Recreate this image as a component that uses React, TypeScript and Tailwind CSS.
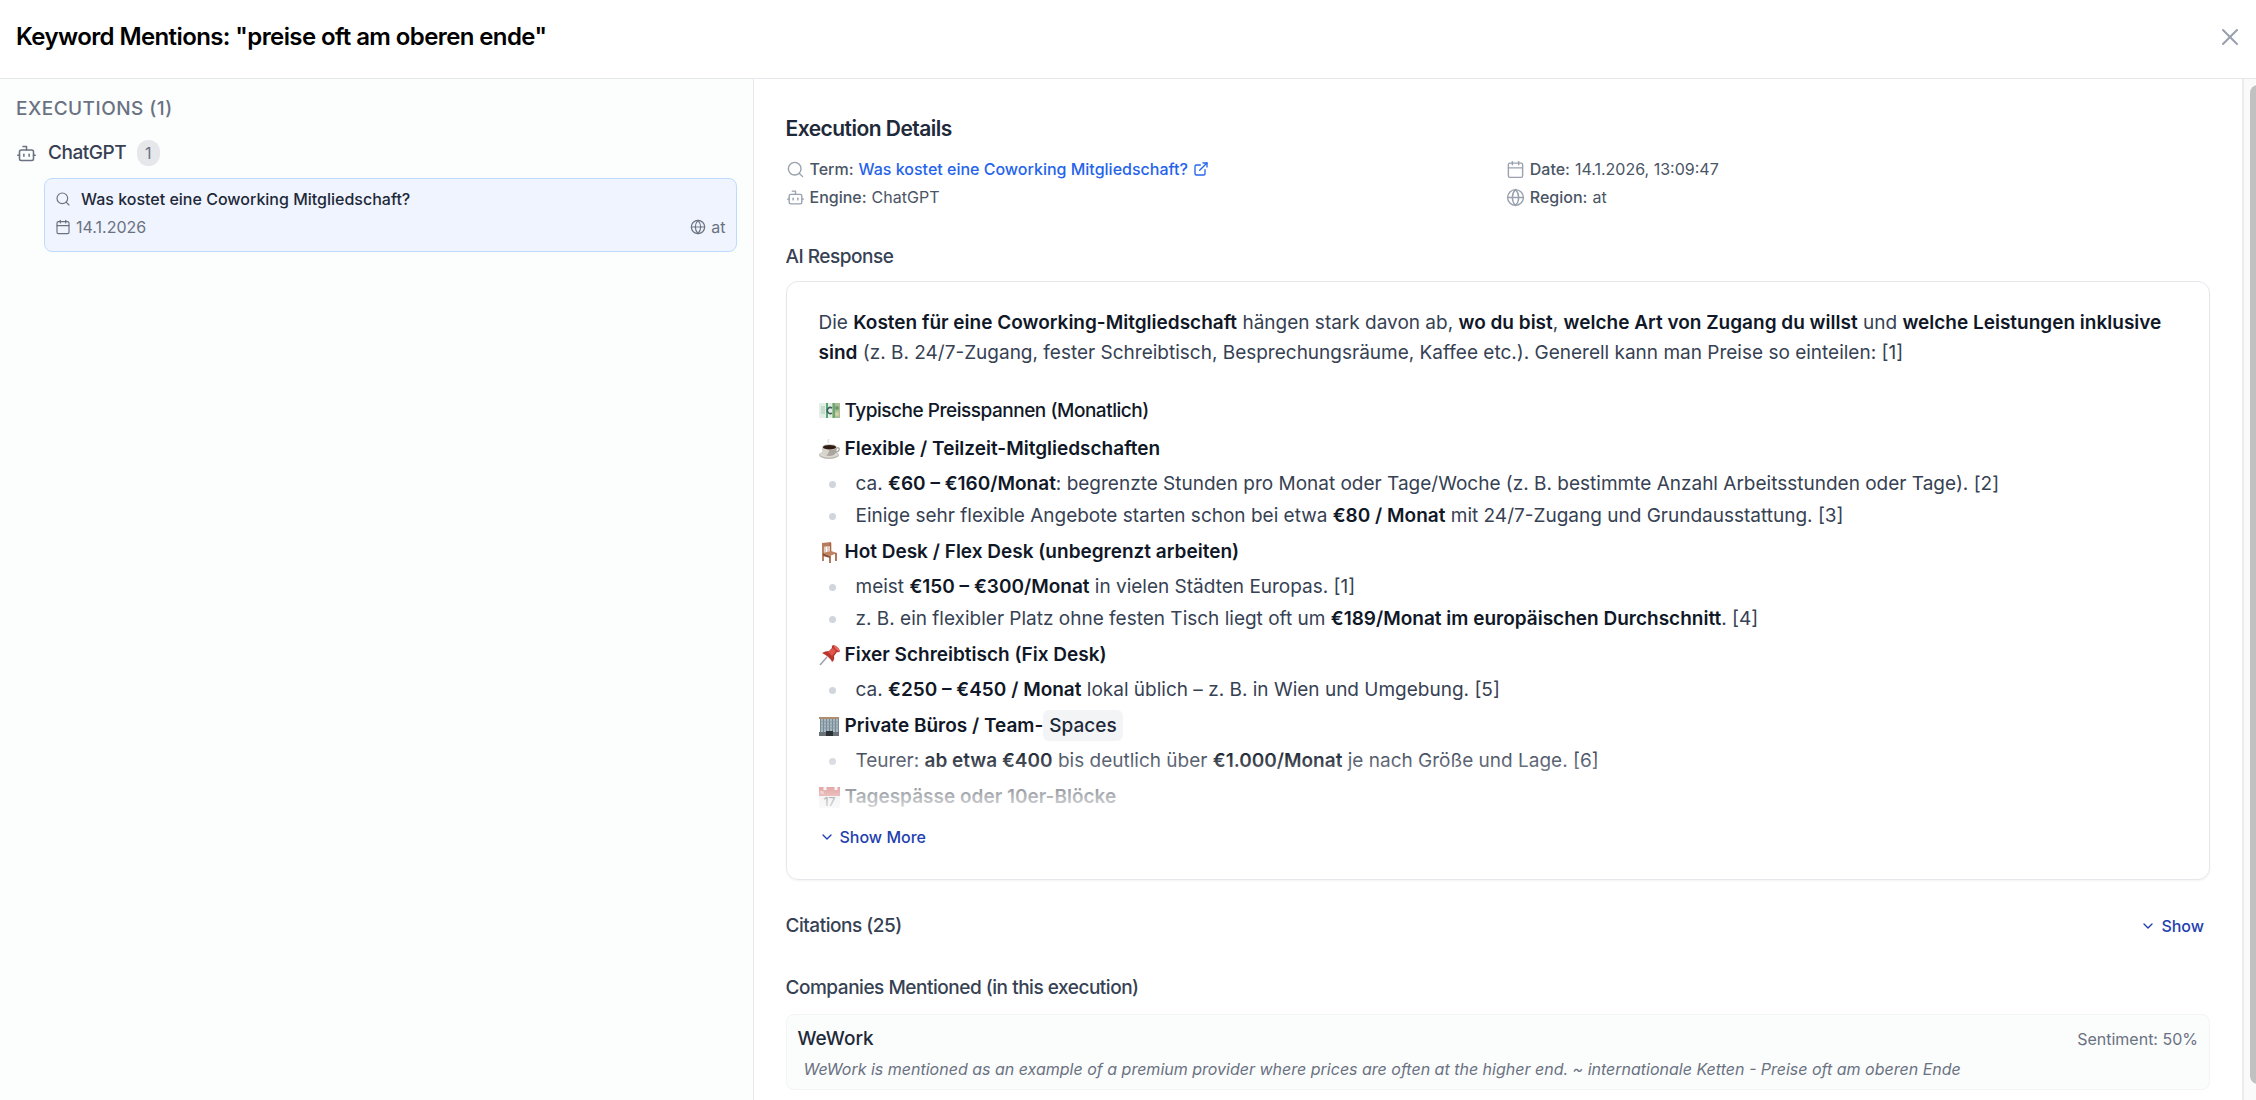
import { Bot, Calendar, ChevronDown, ExternalLink, Globe, Search, X } from "lucide-react";
import type { ReactNode } from "react";

type Section = {
  icon: ReactNode;
  title: ReactNode;
  items: ReactNode[];
};

const CashIcon = () => (
  <svg viewBox="0 0 21 21" className="w-[21px] h-[21px] shrink-0" aria-hidden="true">
    <rect x="0" y="2" width="21" height="15" rx="1" fill="#e3eee6" />
    <path d="M2 5h4v8H2z" fill="#c3dccb" />
    <rect x="7" y="2" width="2" height="15" fill="#58a673" />
    <rect x="13" y="2" width="8" height="15" fill="#a9bf98" />
    <path d="M14 2h2v15h-2z" fill="#6aa877" />
    <path d="M13 7a3 3 0 1 0 0 5" fill="none" stroke="#3d5a5b" strokeWidth="1.5" />
    <circle cx="18" cy="7" r="2" fill="#6f9a6c" />
    <circle cx="18" cy="13" r="2" fill="#d5cf9d" />
  </svg>
);

const CoffeeIcon = () => (
  <svg viewBox="0 0 21 21" className="w-[21px] h-[21px] shrink-0" aria-hidden="true">
    <path d="M10 0q-2 2 0 4" stroke="#dedede" strokeWidth="1.2" fill="none" />
    <ellipse cx="10" cy="16" rx="10" ry="4" fill="#bdb9b2" />
    <ellipse cx="10" cy="15.500" rx="9" ry="3" fill="#dcd9d4" />
    <path d="M3 8q0 9 7.500 9t7.500-9z" fill="#aaa59e" />
    <path d="M3 8q0 7 4 8.500q4-2 3-8.500z" fill="#d8d4cd" />
    <path d="M17 9q4-1 3 2t-5 2" stroke="#aaa59b" strokeWidth="1.300" fill="none" />
    <ellipse cx="10.500" cy="8" rx="7.500" ry="3" fill="#d9d6d0" />
    <ellipse cx="10.500" cy="8.200" rx="6.500" ry="2.300" fill="#2f1d14" />
  </svg>
);

const ChairIcon = () => (
  <svg viewBox="0 0 21 21" className="w-[21px] h-[21px] shrink-0" aria-hidden="true">
    <path d="M4 2v17" stroke="#a56546" strokeWidth="1.600" />
    <path d="M3 1l9-1v4l-9 1z" fill="#b87a5c" />
    <path d="M6 5v6M9 4v6" stroke="#c99a80" strokeWidth="1" />
    <path d="M11.500 1v9" stroke="#a56546" strokeWidth="1.600" />
    <path d="M4 11l8-2 6 2-7 3z" fill="#c08261" />
    <path d="M4 11l7 3v2l-7-2z" fill="#8f5236" />
    <path d="M11 14v7M17 11v8" stroke="#96593c" strokeWidth="1.600" />
  </svg>
);

const PinIcon = () => (
  <svg viewBox="0 0 21 21" className="w-[21px] h-[21px] shrink-0" aria-hidden="true">
    <path d="M8 12L1 20" stroke="#9aa3ab" strokeWidth="1.500" />
    <path d="M3 8q3-2 7-2l3-3q-1-2 1-3q5 1 7 6q-1 2-3 1l-3 4q1 4-2 6q-2-5-10-9z" fill="#b9352f" />
    <path d="M9 7l5-4 3 3-4 5z" fill="#e0564d" />
    <path d="M14 0q5 1 7 6l-2 0q-3-2-5-6z" fill="#e8695f" />
  </svg>
);

const OfficeIcon = () => (
  <svg viewBox="0 0 21 21" className="w-[21px] h-[21px] shrink-0" aria-hidden="true">
    <rect x="0" y="1" width="20" height="2" fill="#b08d6d" />
    <rect x="1" y="3" width="19" height="14" fill="#77868f" />
    <path d="M3 3v13M6 3v13M9 3v13M12 3v13M15 3v13M18 3v13" stroke="#b9d0dc" strokeWidth="1.400" />
    <path d="M1 6h19M1 9h19M1 12h19" stroke="#8a98a0" strokeWidth="1" />
    <rect x="0" y="16" width="20" height="4" fill="#6a7276" />
    <rect x="7" y="15" width="7" height="5" fill="#2b3134" />
  </svg>
);

const DayIcon = () => (
  <svg viewBox="0 0 21 21" className="w-[21px] h-[21px] shrink-0" aria-hidden="true">
    <rect width="21" height="21" rx="1" fill="#dedede" />
    <rect width="21" height="9" fill="#c2413d" />
    <path d="M2 7V4l2 3V4" stroke="#e8a9a6" strokeWidth="1" fill="none" />
    <path d="M6 0v3M17 0v3" stroke="#f7eaea" strokeWidth="3" />
    <text x="10.500" y="19" fontSize="12" textAnchor="middle" fill="#222">17</text>
  </svg>
);

const sections: Section[] = [
  {
    icon: <CoffeeIcon />,
    title: "Flexible / Teilzeit-Mitgliedschaften",
    items: [
      <>ca. <B>€60 – €160/Monat</B>: begrenzte Stunden pro Monat oder Tage/Woche (z. B. bestimmte Anzahl Arbeitsstunden oder Tage). [2]</>,
      <>Einige sehr flexible Angebote starten schon bei etwa <B>€80 / Monat</B> mit 24/7-Zugang und Grundausstattung. [3]</>,
    ],
  },
  {
    icon: <ChairIcon />,
    title: "Hot Desk / Flex Desk (unbegrenzt arbeiten)",
    items: [
      <>meist <B>€150 – €300/Monat</B> in vielen Städten Europas. [1]</>,
      <>z. B. ein flexibler Platz ohne festen Tisch liegt oft um <B>€189/Monat im europäischen Durchschnitt</B>. [4]</>,
    ],
  },
  {
    icon: <PinIcon />,
    title: "Fixer Schreibtisch (Fix Desk)",
    items: [<>ca. <B>€250 – €450 / Monat</B> lokal üblich – z. B. in Wien und Umgebung. [5]</>],
  },
  {
    icon: <OfficeIcon />,
    title: (
      <>
        Private Büros / Team-
        <span className="rounded-md bg-gray-100 px-1.5 py-1 font-medium text-gray-800">Spaces</span>
      </>
    ),
    items: [<>Teurer: <B>ab etwa €400</B> bis deutlich über <B>€1.000/Monat</B> je nach Größe und Lage. [6]</>],
  },
  { icon: <DayIcon />, title: "Tagespässe oder 10er-Blöcke", items: [] },
];

function B({ children }: { children: ReactNode }) {
  return <strong className="font-semibold text-gray-900">{children}</strong>;
}

function Detail({ icon, label, children }: { icon: ReactNode; label: string; children: ReactNode }) {
  return (
    <div className="flex items-center gap-[5px] text-gray-600">
      <span className="text-gray-400">{icon}</span>
      <span className="font-medium">{label}:</span>
      {children}
    </div>
  );
}

export default function App() {
  return (
    <div className="flex h-screen flex-col overflow-hidden bg-white font-['Inter',sans-serif] text-[19px] leading-7 text-gray-700">
      <header className="flex shrink-0 items-center justify-between border-b border-gray-200 px-4 pt-5 pb-6">
        <h2 className="text-2xl leading-[34px] font-semibold tracking-tight text-black">
          Keyword Mentions: "preise oft am oberen ende"
        </h2>
        <button type="button" aria-label="Close" className="cursor-pointer text-gray-400 -mr-1">
          <X size={28} strokeWidth={1.75} />
        </button>
      </header>

      <div className="flex min-h-0 flex-1">
        <aside className="w-[33.4%] shrink-0 border-r border-gray-200 bg-[#fcfdfd] px-4 py-4">
          <h3 className="font-medium tracking-wide text-gray-500 uppercase">Executions (1)</h3>
          <div className="mt-4 flex items-center gap-[11px]">
            <Bot size={21} strokeWidth={1.75} className="text-gray-500" />
            <h4 className="font-medium tracking-tight text-gray-700">ChatGPT</h4>
            <span className="rounded-full bg-gray-200 px-2 text-base leading-[26px] text-gray-500">1</span>
          </div>
          <button
            type="button"
            className="mt-[11px] ml-7 block w-[calc(100%-28px)] cursor-pointer rounded-lg border border-blue-200 bg-[#f0f4fe] px-2.5 pt-1.5 pb-2.5 text-left text-base leading-7"
          >
            <span className="flex items-center gap-2.5">
              <Search size={16} strokeWidth={1.75} className="text-gray-500" />
              <span className="font-medium text-gray-800">Was kostet eine Coworking Mitgliedschaft?</span>
            </span>
            <span className="flex items-center justify-between text-gray-500">
              <span className="flex items-center gap-[5px]">
                <Calendar size={16} strokeWidth={1.75} />
                14.1.2026
              </span>
              <span className="flex items-center gap-[5px]">
                <Globe size={16} strokeWidth={1.75} />
                at
              </span>
            </span>
          </button>
        </aside>

        <main className="min-w-0 flex-1 overflow-hidden px-8 pt-8">
          <h3 className="text-[21px] leading-9 font-semibold tracking-tight text-gray-800">Execution Details</h3>
          <div className="mt-2 grid grid-cols-2 gap-x-4 text-base leading-7">
            <Detail icon={<Search size={19} strokeWidth={1.75} />} label="Term">
              <a href="#term" className="flex items-center gap-[5px] font-medium text-[#2563eb]">
                Was kostet eine Coworking Mitgliedschaft?
                <ExternalLink size={16} />
              </a>
            </Detail>
            <Detail icon={<Calendar size={19} strokeWidth={1.75} />} label="Date">14.1.2026, 13:09:47</Detail>
            <Detail icon={<Bot size={19} strokeWidth={1.75} />} label="Engine">ChatGPT</Detail>
            <Detail icon={<Globe size={19} strokeWidth={1.75} />} label="Region">at</Detail>
          </div>

          <h4 className="mt-8 font-medium tracking-tight">AI Response</h4>
          <section className="mt-2.5 rounded-xl border border-gray-200 px-8 pt-[26px] pb-7 shadow-xs">
            {/* collapsed preview, fades out at the bottom */}
            <div className="relative max-h-[512px] overflow-hidden pb-4">
              <p className="leading-[30px]">
                Die <B>Kosten für eine Coworking-Mitgliedschaft</B> hängen stark davon ab, <B>wo du bist</B>,{" "}
                <B>welche Art von Zugang du willst</B> und <B>welche Leistungen inklusive sind</B> (z. B. 24/7-Zugang,
                fester Schreibtisch, Besprechungsräume, Kaffee etc.). Generell kann man Preise so einteilen: [1]
              </p>
              <h3 className="mt-7 mb-[3px] flex items-center gap-[5px] leading-[30px] font-medium tracking-tight text-gray-900">
                <CashIcon />
                Typische Preisspannen (Monatlich)
              </h3>
              {sections.map((s, i) => (
                <div key={i} className="pt-1">
                  <h4 className="flex items-center gap-[5px] leading-8 font-semibold text-gray-900">
                    {s.icon}
                    <span>{s.title}</span>
                  </h4>
                  <ul className="pt-[3px]">
                    {s.items.map((item, j) => (
                      <li key={j} className="flex items-center gap-5 pl-2.5 leading-8">
                        <span className="h-[7px] w-[7px] shrink-0 rounded-full bg-gray-300" />
                        <span>{item}</span>
                      </li>
                    ))}
                  </ul>
                </div>
              ))}
              <div className="absolute inset-x-0 bottom-0 h-[72px] bg-linear-to-t from-white to-transparent" />
            </div>
            <button type="button" className="mt-[3px] flex cursor-pointer items-center gap-[5px] text-base leading-7 font-medium text-[#1e40af]">
              <ChevronDown size={16} />
              Show More
            </button>
          </section>

          <div className="mt-8 flex items-center justify-between">
            <h4 className="font-medium tracking-tight">Citations (25)</h4>
            <button type="button" className="mr-1.5 flex cursor-pointer items-center gap-[5px] text-base leading-7 font-medium text-[#1e40af]">
              <ChevronDown size={16} />
              Show
            </button>
          </div>

          <h4 className="mt-[34px] font-medium tracking-tight">Companies Mentioned (in this execution)</h4>
          <div className="mt-3 flex flex-col gap-2.5">
            <article className="rounded-lg border border-gray-100 bg-[#fbfcfc] px-[11px] pt-2.5 pb-1.5">
              <div className="flex items-center justify-between">
                <span className="font-medium text-gray-800">WeWork</span>
                <span className="text-base text-gray-500">Sentiment: 50%</span>
              </div>
              <p className="mt-0.5 pl-1.5 text-base leading-7 text-gray-500 italic">
                WeWork is mentioned as an example of a premium provider where prices are often at the higher end. ~
                internationale Ketten - Preise oft am oberen Ende
              </p>
            </article>
            <article className="h-16 rounded-lg border border-gray-100 bg-[#fbfcfc]" />
          </div>
        </main>

        <div className="w-3.5 shrink-0 overflow-hidden border-l-2 border-[#ececec] bg-[#fafafa] pt-1.5 pb-4 pl-1.5">
          <div className="h-full w-4 rounded-full bg-[#c1c1c1]" />
        </div>
      </div>
    </div>
  );
}
